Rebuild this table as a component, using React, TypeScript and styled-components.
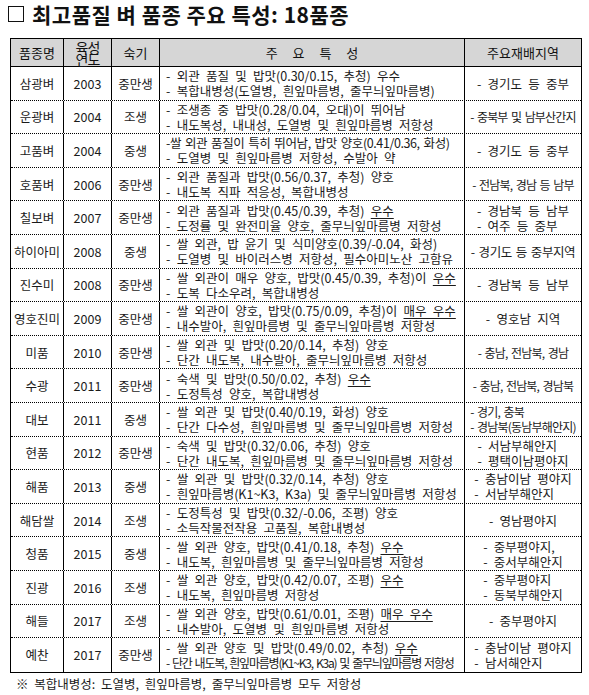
import styled, { createGlobalStyle } from "styled-components";

const GlobalStyle = createGlobalStyle`
  body {
    margin: 0;
    background: #fff;
    font-family: "Noto Sans CJK KR", "Noto Sans", sans-serif;
    color: #1a1a1a;
  }
`;

const COLS = "53px 48px 48px 305px 1fr";

const S = {
  Page: styled.div`
    width: 589px;
    height: 695px;
    padding: 1px 0 0 10px;
    box-sizing: border-box;
  `,
  Title: styled.h1`
    margin: 0 0 0 -2px;
    height: 37px;
    display: flex;
    align-items: flex-start;
    gap: 8px;
    font-size: 21px;
    font-weight: 700;
    line-height: 26px;
    color: #111;
    letter-spacing: 0.5px;
  `,
  Box: styled.span`
    display: inline-block;
    width: 16px;
    height: 16px;
    margin-top: 5px;
    border: 1.5px solid #111;
    box-sizing: border-box;
  `,
  Table: styled.div`
    width: 572px;
    border: 1px solid #000;
    box-sizing: border-box;
  `,
  HeadRow: styled.div`
    display: grid;
    grid-template-columns: ${COLS};
    height: 27px;
    background: #d6d6d6;
    border-bottom: 1px solid #000;
  `,
  Row: styled.div<{ $last?: boolean }>`
    display: grid;
    grid-template-columns: ${COLS};
    height: 33.6px;
    box-sizing: border-box;
    border-bottom: ${(p) => (p.$last ? "none" : "1px dotted #000")};
  `,
  HeadCell: styled.div<{ $spaced?: boolean }>`
    display: flex;
    align-items: center;
    justify-content: center;
    border-right: 1px solid #000;
    font-size: 13px;
    color: #111;
    word-spacing: ${(p) => (p.$spaced ? "12px" : "0")};
    &:last-child {
      border-right: none;
    }
  `,
  Stack: styled.div`
    display: flex;
    flex-direction: column;
    align-items: center;
    font-size: 14px;
    line-height: 12px;
    letter-spacing: -1px;
  `,
  Cell: styled.div<{ $left?: boolean }>`
    display: flex;
    flex-direction: column;
    justify-content: center;
    align-items: ${(p) => (p.$left ? "flex-start" : "center")};
    padding-left: ${(p) => (p.$left ? "6px" : "0")};
    border-right: 1px solid #000;
    font-size: 12.5px;
    overflow: hidden;
    &:last-child {
      border-right: none;
    }
  `,
  Region: styled.div`
    display: flex;
    flex-direction: column;
    justify-content: center;
    align-items: center;
    overflow: hidden;
  `,
  RegionInner: styled.div`
    display: flex;
    flex-direction: column;
    align-items: flex-start;
  `,
  Line: styled.div<{ $squeeze?: number }>`
    white-space: nowrap;
    line-height: 15px;
    font-size: ${(p) => (p.$squeeze && p.$squeeze > 1 ? "12px" : "12.5px")};
    word-spacing: ${(p) => (p.$squeeze ? "1.5px" : "3.5px")};
    letter-spacing: ${(p) => (p.$squeeze ? `${-0.4 * p.$squeeze}px` : "0")};
  `,
  Good: styled.span`
    text-decoration: underline;
    text-underline-offset: 2px;
  `,
  Note: styled.div`
    margin: 1px 0 0 6px;
    font-size: 12.5px;
    word-spacing: 3px;
  `,
};

type Variety = {
  name: string;
  year: string;
  season: string;
  traits: [string, string];
  good?: string;
  squeeze?: [number, number];
  regions: string[];
  squeezeRegion?: number;
};

const rows: Variety[] = [
  { name: "삼광벼", year: "2003", season: "중만생", traits: ["- 외관 품질 및 밥맛(0.30/0.15, 추청) 우수", "- 복합내병성(도열병, 흰잎마름병, 줄무늬잎마름병)"], regions: ["- 경기도 등 중부"] },
  { name: "운광벼", year: "2004", season: "조생", traits: ["- 조생종 중 밥맛(0.28/0.04, 오대)이 뛰어남", "- 내도복성, 내내성, 도열병 및 흰잎마름병 저항성"], regions: ["- 중북부 및 남부산간지"], squeezeRegion: 2 },
  { name: "고품벼", year: "2004", season: "중생", traits: ["-쌀 외관 품질이 특히 뛰어남, 밥맛 양호(0.41/0.36, 화성)", "- 도열병 및 흰잎마름병 저항성, 수발아 약"], squeeze: [1, 0], regions: ["- 경기도 등 중부"] },
  { name: "호품벼", year: "2006", season: "중만생", traits: ["- 외관 품질과 밥맛(0.56/0.37, 추청) 양호", "- 내도복 직파 적응성, 복합내병성"], regions: ["- 전남북, 경남 등 남부"], squeezeRegion: 2 },
  { name: "칠보벼", year: "2007", season: "중만생", traits: ["- 외관 품질과 밥맛(0.45/0.39, 추청) ", "- 도정률 및 완전미율 양호, 줄무늬잎마름병 저항성"], good: "우수", regions: ["- 경남북 등 남부", "- 여주 등 중부"] },
  { name: "하이아미", year: "2008", season: "중생", traits: ["- 쌀 외관, 밥 윤기 및 식미양호(0.39/-0.04, 화성)", "- 도열병 및 바이러스병 저항성, 필수아미노산 고함유"], regions: ["- 경기도 등 중부지역"], squeezeRegion: 1 },
  { name: "진수미", year: "2008", season: "중만생", traits: ["- 쌀 외관이 매우 양호, 밥맛(0.45/0.39, 추청)이 ", "- 도복 다소우려, 복합내병성"], good: "우수", regions: ["- 경남북 등 남부"] },
  { name: "영호진미", year: "2009", season: "중만생", traits: ["- 쌀 외관이 양호, 밥맛(0.75/0.09, 추청)이 ", "- 내수발아, 흰잎마름병 및 줄무늬잎마름병 저항성"], good: "매우 우수", regions: ["- 영호남 지역"] },
  { name: "미품", year: "2010", season: "중만생", traits: ["- 쌀 외관 및 밥맛(0.20/0.14, 추청) 양호", "- 단간 내도복, 내수발아, 줄무늬잎마름병 저항성"], regions: ["- 충남, 전남북, 경남"], squeezeRegion: 2 },
  { name: "수광", year: "2011", season: "중만생", traits: ["- 숙색 및 밥맛(0.50/0.02, 추청) ", "- 도정특성 양호, 복합내병성"], good: "우수", regions: ["- 충남, 전남북, 경남북"], squeezeRegion: 2 },
  { name: "대보", year: "2011", season: "중생", traits: ["- 쌀 외관 및 밥맛(0.40/0.19, 화성) 양호", "- 단간 다수성, 흰잎마름병 및 줄무늬잎마름병 저항성"], regions: ["- 경기, 충북", "- 경남북(동남부해안지)"], squeezeRegion: 2 },
  { name: "현품", year: "2012", season: "중만생", traits: ["- 숙색 및 밥맛(0.32/0.06, 추청) 양호", "- 단간 내도복, 흰잎마름병 및 줄무늬잎마름병 저항성"], regions: ["- 서남부해안지", "- 평택이남평야지"] },
  { name: "해품", year: "2013", season: "중생", traits: ["- 쌀 외관 및 밥맛(0.32/0.14, 추청) 양호", "- 흰잎마름병(K1~K3, K3a) 및 줄무늬잎마름병 저항성"], regions: ["- 충남이남 평야지", "- 서남부해안지"] },
  { name: "해담쌀", year: "2014", season: "조생", traits: ["- 도정특성 및 밥맛(0.32/-0.06, 조평) 양호", "- 소득작물전작용 고품질, 복합내병성"], regions: ["- 영남평야지"] },
  { name: "청품", year: "2015", season: "중생", traits: ["- 쌀 외관 양호, 밥맛(0.41/0.18, 추청) ", "- 내도복, 흰잎마름병 및 줄무늬잎마름병 저항성"], good: "우수", regions: ["- 중부평야지,", "- 중서부해안지"] },
  { name: "진광", year: "2016", season: "조생", traits: ["- 쌀 외관 양호, 밥맛(0.42/0.07, 조평) ", "- 내도복, 흰잎마름병 저항성"], good: "우수", regions: ["- 중부평야지", "- 동북부해안지"] },
  { name: "해들", year: "2017", season: "조생", traits: ["- 쌀 외관 양호, 밥맛(0.61/0.01, 조평) ", "- 내수발아, 도열병 및 흰잎마름병 저항성"], good: "매우 우수", regions: ["- 중부평야지"] },
  { name: "예찬", year: "2017", season: "중만생", traits: ["- 쌀 외관 양호 및 밥맛(0.49/0.02, 추청) ", "- 단간 내도복, 흰잎마름병(K1~K3, K3a) 및 줄무늬잎마름병 저항성"], good: "우수", squeeze: [0, 3], regions: ["- 충남이남 평야지", "- 남서해안지"] },
];

const App = () => {
  return (
    <S.Page>
      <GlobalStyle />
      <S.Title>
        <S.Box />
        <span>최고품질 벼 품종 주요 특성: 18품종</span>
      </S.Title>
      <S.Table>
        <S.HeadRow>
          <S.HeadCell>품종명</S.HeadCell>
          <S.HeadCell>
            <S.Stack>
              <span>육성</span>
              <span>연도</span>
            </S.Stack>
          </S.HeadCell>
          <S.HeadCell>숙기</S.HeadCell>
          <S.HeadCell $spaced>주 요 특 성</S.HeadCell>
          <S.HeadCell>주요재배지역</S.HeadCell>
        </S.HeadRow>
        {rows.map((r, i) => (
          <S.Row key={r.name} $last={i === rows.length - 1}>
            <S.Cell>{r.name}</S.Cell>
            <S.Cell>{r.year}</S.Cell>
            <S.Cell>{r.season}</S.Cell>
            <S.Cell $left>
              <S.Line $squeeze={r.squeeze?.[0]}>
                {r.traits[0]}
                {r.good && <S.Good>{r.good}</S.Good>}
              </S.Line>
              <S.Line $squeeze={r.squeeze?.[1]}>{r.traits[1]}</S.Line>
            </S.Cell>
            <S.Region>
              <S.RegionInner>
                {r.regions.map((g) => (
                  <S.Line key={g} $squeeze={r.squeezeRegion}>
                    {g}
                  </S.Line>
                ))}
              </S.RegionInner>
            </S.Region>
          </S.Row>
        ))}
      </S.Table>
      <S.Note>※ 복합내병성: 도열병, 흰잎마름병, 줄무늬잎마름병 모두 저항성</S.Note>
    </S.Page>
  );
};

export default App;
